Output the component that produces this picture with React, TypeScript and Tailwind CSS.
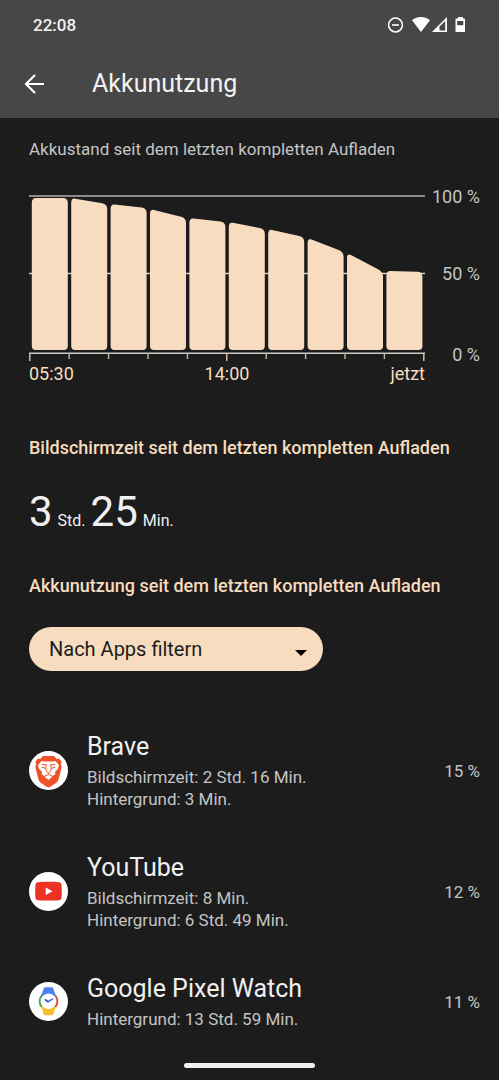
import type { ReactNode } from "react";

type AppUsage = { name: string; details: string[]; percent: string; icon: ReactNode };

// Battery level at the start and end of each bar, as y coordinates in the chart.
const bars: [number, number][] = [
  [8, 8],
  [8, 14],
  [14, 18],
  [19, 28],
  [28, 32],
  [32, 39],
  [39, 47],
  [48, 62],
  [63, 82],
  [81, 82],
];

function barPath(x: number, left: number, right: number) {
  const w = 36;
  const bottom = 160;
  const slope = (right - left) / w;
  return [
    `M${x} ${left + 5}`,
    `Q${x} ${left} ${x + 4} ${left + slope * 4}`,
    `L${x + w - 5} ${right - slope * 5}`,
    `Q${x + w} ${right} ${x + w} ${right + 5}`,
    `V${bottom - 4}`,
    `Q${x + w} ${bottom} ${x + w - 4} ${bottom}`,
    `H${x + 4}`,
    `Q${x} ${bottom} ${x} ${bottom - 4}`,
    "Z",
  ].join(" ");
}

function BatteryChart() {
  const pitch = 39.4;
  return (
    <svg viewBox="0 0 396 172" className="block w-full" role="img" aria-label="Akkustand">
      <path d="M0 6H396" stroke="#b5afb0" strokeWidth="1.7" />
      <path d="M0 83.500H396" stroke="#d5d2cc" strokeWidth="1.300" />
      {bars.map(([left, right], i) => (
        <path key={i} d={barPath(2.8 + i * pitch, left, right)} fill="#f7dcbf" />
      ))}
      <path d="M0 163.300H396" stroke="#c9cbbf" strokeWidth="1.400" />
      {Array.from({ length: 11 }, (_, i) => (
        <path
          key={i}
          d={`M${0.8 + i * pitch} 163V${i % 5 === 0 ? 171 : 169}`}
          stroke={i % 5 === 0 ? "#dcc5ab" : "#b9bab2"}
          strokeWidth="1.400"
        />
      ))}
    </svg>
  );
}

function BraveIcon() {
  return (
    <svg viewBox="0 0 39 39" className="size-full" aria-hidden="true">
      <circle cx="19.5" cy="19.5" r="19.5" fill="#fff" />
      <path d="M14 5h11l2.600 3 2.600-.4 2.400 3.200-.8 2.500.9 2.700-3.200 12.500c-.4 1.400-1.300 2.500-2.500 3.400l-6 4.200c-.9.6-2.100.6-3 0l-6-4.200a6.500 6.500 0 0 1-2.500-3.400L6.300 16l.9-2.700-.8-2.500L8.800 7.600l2.600.4Z" fill="#ee5226" />
      <path d="M12.500 10 16 10.500h7l3.500-.5 3.500 4.300-1.200 3.700-3 3.300.6 2-2.800 1.700-2.700-1.500h-2.800l-2.700 1.500-2.800-1.700.6-2-3-3.300L9 14.300Z" fill="#fff" />
      <g fill="none" stroke="#ee5226" strokeLinecap="round" strokeLinejoin="round">
        <path d="m13.300 13.300 4 .7M25.700 13.300l-4 .7" strokeWidth="1.100" />
        <path d="m13.200 16.300 3 .9M25.800 16.300l-3 .9" strokeWidth="1.200" />
        <path d="m17.300 14-.5 4 .8 2.800 1.900 1.300 1.900-1.300.8-2.800-.5-4M19.500 22.100v1.200" strokeWidth=".9" />
      </g>
      <path d="m15 25.800 4.500-2.500 4.500 2.500-4.500 3.400Z" fill="#fff" stroke="#ee5226" strokeWidth=".8" />
    </svg>
  );
}

function YouTubeIcon() {
  return (
    <svg viewBox="0 0 39 39" className="size-full" aria-hidden="true">
      <circle cx="19.5" cy="19.5" r="19.5" fill="#fff" />
      <path d="M9 10.200c6-.5 15-.5 21 0 1.700.2 2.500 1.300 2.600 3 .3 4 .3 8.200 0 12-.1 1.700-.9 2.800-2.600 3-6 .5-15 .5-21 0-1.700-.2-2.500-1.300-2.600-3-.3-3.800-.3-8 0-12 .1-1.700.9-2.800 2.600-3Z" fill="#eb3223" />
      <path d="m16.700 15.500 6.800 3.800-6.800 3.800Z" fill="#fff" />
    </svg>
  );
}

function WatchIcon() {
  return (
    <svg viewBox="0 0 39 39" className="size-full" aria-hidden="true">
      <circle cx="19.5" cy="19.5" r="19.5" fill="#fff" />
      <path d="m12.300 13.500 2.400-7c.2-.8.700-1.200 1.500-1.200h6.600c.8 0 1.300.4 1.500 1.200l2.400 7Z" fill="#4b83ee" />
      <path d="m12.300 25 2.400 7c.2.800.7 1.200 1.500 1.200h6.600c.8 0 1.300-.4 1.500-1.200l2.400-7Z" fill="#f5bd31" />
      <circle cx="19.500" cy="19.300" r="8.500" fill="#fff" />
      <g fill="none" strokeWidth="1.900">
        <path d="M12.700 13.700A8.700 8.700 0 0 1 26.300 13.700" stroke="#4b83ee" />
        <path d="M26.300 13.700A8.700 8.700 0 0 1 26.300 24.900" stroke="#e04a3b" />
        <path d="M26.300 24.900A8.700 8.700 0 0 1 12.700 24.900" stroke="#f5bd31" />
        <path d="M12.700 24.900A8.700 8.700 0 0 1 12.700 13.700" stroke="#47a25a" />
      </g>
      <path d="m19 19.800 5-3" fill="none" stroke="#4b83ee" strokeWidth="1.600" />
      <path d="m15.800 17.300 3.700 2.700" fill="none" stroke="#2754b8" strokeWidth="1.600" />
    </svg>
  );
}

const apps: AppUsage[] = [
  {
    name: "Brave",
    details: ["Bildschirmzeit: 2 Std. 16 Min.", "Hintergrund: 3 Min."],
    percent: "15 %",
    icon: <BraveIcon />,
  },
  {
    name: "YouTube",
    details: ["Bildschirmzeit: 8 Min.", "Hintergrund: 6 Std. 49 Min."],
    percent: "12 %",
    icon: <YouTubeIcon />,
  },
  {
    name: "Google Pixel Watch",
    details: ["Hintergrund: 13 Std. 59 Min."],
    percent: "11 %",
    icon: <WatchIcon />,
  },
];

function StatusIcons() {
  return (
    <svg viewBox="0 0 80 18" className="h-[18px] w-20" fill="#fff" aria-hidden="true">
      <circle cx="9.500" cy="9" r="6.900" fill="none" stroke="#fff" strokeWidth="1.500" />
      <path d="M6 8.200h7v1.600H6Z" />
      <path d="M26 4.200C31.200 0 38.800 0 44 4.200L35 16Z" />
      <path d="M46 16 61 1v15Z" />
      <path d="M53.500 10.500 59.200 5v9.500h-5.700Z" fill="#474747" />
      <path d="M72 1h5v1.500h1c.7 0 1 .3 1 1V15c0 .700-.3 1-1 1h-7.500c-.700 0-1-.3-1-1V3.500c0-.7.300-1 1-1H72Z" />
      <path d="M71.200 5h6.100v4.200h-6.100Z" fill="#474747" />
    </svg>
  );
}

export default function App() {
  return (
    <div className="flex min-h-screen flex-col bg-[#1c1c1c] font-['Roboto',sans-serif] text-[17px] leading-[22px] text-[#c4c4c4]">
      <header className="bg-[#474747] text-[#f3f3f3]">
        <div className="flex h-[50px] items-center justify-between px-[33px]">
          <time className="font-medium">22:08</time>
          <StatusIcons />
        </div>
        <div className="flex h-[68px] items-center gap-12 pl-6">
          <button type="button" aria-label="Zurück" className="flex">
            <svg viewBox="0 0 20 20" className="size-5" fill="none" stroke="#fff" strokeWidth="2.200" aria-hidden="true">
              <path d="M20 10H2M11 1 2 10l9 9" />
            </svg>
          </button>
          <h1 className="text-[25px] leading-8">Akkunutzung</h1>
        </div>
      </header>

      <main className="flex flex-col pt-5 pr-[19px] pl-[29px]">
        <h2>Akkustand seit dem letzten kompletten Aufladen</h2>

        <section className="mt-[26px] flex gap-1">
          <div className="min-w-0 flex-1 pt-1">
            <BatteryChart />
            <div className="mt-px grid grid-cols-3 text-[18px] text-[#f7dcbf]">
              <span>05:30</span>
              <span className="text-center">14:00</span>
              <span className="text-right">jetzt</span>
            </div>
          </div>
          <div className="flex w-[51px] flex-col text-right text-[18px] whitespace-nowrap">
            <span>100 %</span>
            <span className="mt-[55px]">50 %</span>
            <span className="mt-[59px]">0 %</span>
          </div>
        </section>

        <h2 className="mt-[52px] text-[18px] font-medium text-[#f7dcbf]">
          Bildschirmzeit seit dem letzten kompletten Aufladen
        </h2>
        <p className="mt-[27px] flex items-baseline gap-[5px] text-[16px] leading-[52px] text-[#f0f0f0]">
          <span className="text-[42px]">3</span>
          <span>Std.</span>
          <span className="text-[42px]">25</span>
          <span>Min.</span>
        </p>
        <h2 className="mt-7 text-[18px] font-medium text-[#f7dcbf]">
          Akkunutzung seit dem letzten kompletten Aufladen
        </h2>

        <div className="relative mt-[30px] w-[294px] max-w-full">
          <select
            aria-label="Filter"
            className="h-11 w-full appearance-none rounded-full bg-[#f7dcbf] px-5 text-[20px] text-[#1c1c1c]"
          >
            <option>Nach Apps filtern</option>
          </select>
          <svg viewBox="0 0 12 6" className="pointer-events-none absolute top-[23px] right-4 h-1.5 w-3" aria-hidden="true">
            <path d="M0 0h12L6 6Z" fill="#000" />
          </svg>
        </div>

        <ul className="mt-[60px] flex flex-col gap-[42px]">
          {apps.map((app) => (
            <li key={app.name} className="flex items-center">
              <div className="size-[39px] shrink-0">{app.icon}</div>
              <div className="ml-[19px] min-w-0 flex-1">
                <h3 className="mb-[3px] text-[25px] leading-8 text-[#f0f0f0]">{app.name}</h3>
                {app.details.map((line) => (
                  <p key={line}>{line}</p>
                ))}
              </div>
              <span>{app.percent}</span>
            </li>
          ))}
        </ul>
      </main>

      <div className="mt-auto flex justify-center pt-4 pb-3">
        <div className="h-[5px] w-[131px] rounded-full bg-[#f0f0f0]" />
      </div>
    </div>
  );
}
